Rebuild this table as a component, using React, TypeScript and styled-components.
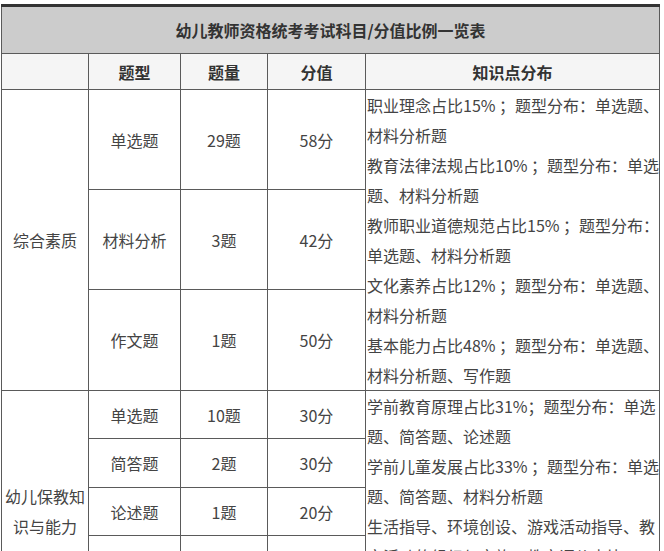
import styled, { createGlobalStyle } from 'styled-components';

const GlobalStyle = createGlobalStyle`
  body {
    margin: 0;
    background: #fff;
    font-family: "Noto Sans CJK SC", "Noto Sans", sans-serif;
  }
`;

type Row = { type: string; count: string; score: string };

const groups: { name: string; rows: Row[]; info: string[]; heights: number[] }[] = [
  {
    name: '综合素质',
    rows: [
      { type: '单选题', count: '29题', score: '58分' },
      { type: '材料分析', count: '3题', score: '42分' },
      { type: '作文题', count: '1题', score: '50分' },
    ],
    heights: [100, 100, 101],
    info: [
      '职业理念占比15% ；题型分布：单选题、',
      '材料分析题',
      '教育法律法规占比10% ；题型分布：单选',
      '题、材料分析题',
      '教师职业道德规范占比15% ；题型分布：',
      '单选题、材料分析题',
      '文化素养占比12% ；题型分布：单选题、',
      '材料分析题',
      '基本能力占比48% ；题型分布：单选题、',
      '材料分析题、写作题',
    ],
  },
  {
    name: '幼儿保教知识与能力',
    rows: [
      { type: '单选题', count: '10题', score: '30分' },
      { type: '简答题', count: '2题', score: '30分' },
      { type: '论述题', count: '1题', score: '20分' },
      { type: '材料分析题', count: '2题', score: '40分' },
      { type: '活动设计题', count: '1题', score: '30分' },
    ],
    heights: [48, 49, 48, 48, 48],
    info: [
      '学前教育原理占比31%；题型分布：单选',
      '题、简答题、论述题',
      '学前儿童发展占比33% ；题型分布：单选',
      '题、简答题、材料分析题',
      '生活指导、环境创设、游戏活动指导、教',
      '育活动的组织与实施，教育评价占比36%',
      '；题型分布：单选题、简答题、论述题、',
      '材料分析题、活动设计题',
    ],
  },
];

export default function App() {
  return (
    <>
      <GlobalStyle />
      <Table>
        <colgroup>
          <col style={{ width: 87 }} />
          <col style={{ width: 92 }} />
          <col style={{ width: 87 }} />
          <col style={{ width: 98 }} />
          <col style={{ width: 294 }} />
        </colgroup>
        <thead>
          <tr>
            <TitleCell colSpan={5}>幼儿教师资格统考考试科目/分值比例一览表</TitleCell>
          </tr>
          <tr>
            <HeadCell />
            <HeadCell>题型</HeadCell>
            <HeadCell>题量</HeadCell>
            <HeadCell>分值</HeadCell>
            <HeadCell>知识点分布</HeadCell>
          </tr>
        </thead>
        <tbody>
          {groups.map((g) =>
            g.rows.map((r, i) => (
              <BodyRow key={g.name + i} $h={g.heights[i]}>
                {i === 0 && <Cell rowSpan={g.rows.length}>{g.name}</Cell>}
                <Cell>{r.type}</Cell>
                <Cell>{r.count}</Cell>
                <Cell>{r.score}</Cell>
                {i === 0 && (
                  <InfoCell rowSpan={g.rows.length}>
                    {g.info.map((line, k) => (
                      <Line key={k}>{line}</Line>
                    ))}
                  </InfoCell>
                )}
              </BodyRow>
            ))
          )}
        </tbody>
      </Table>
    </>
  );
}

const Table = styled.table`
  margin: 4px 0 0 1px;
  width: 658px;
  table-layout: fixed;
  border-collapse: collapse;
  border-top: 3px solid #333;
  font-size: 16px;
  color: #444;
`;

const TitleCell = styled.th`
  height: 46px;
  padding: 0;
  background: #cccccc;
  border: 1px solid #5a5a5a;
  border-top: 3px solid #333;
  color: #333;
  font-weight: 700;
  text-align: center;
`;

const HeadCell = styled.th`
  height: 35px;
  padding: 0;
  background: #f5f5f5;
  border: 1px solid #5a5a5a;
  color: #333;
  font-weight: 700;
  text-align: center;
`;

const BodyRow = styled.tr<{ $h: number }>`
  height: ${(p) => p.$h}px;
`;

const Cell = styled.td`
  padding: 0 2px;
  border: 1px solid #5a5a5a;
  text-align: center;
  vertical-align: middle;
  line-height: 30px;
`;

const InfoCell = styled.td`
  padding: 0 0 0 1px;
  border: 1px solid #5a5a5a;
  vertical-align: top;
  line-height: 30px;
  overflow: hidden;
`;

const Line = styled.div`
  white-space: nowrap;
`;
